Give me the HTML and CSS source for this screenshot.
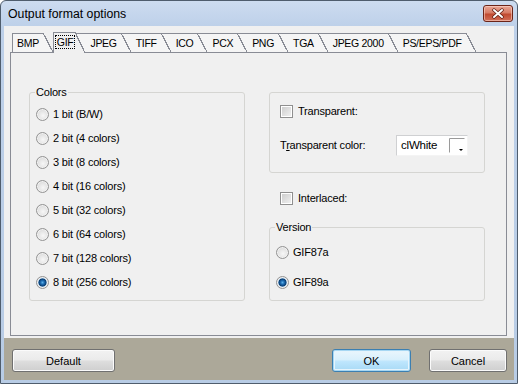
FILE: index.html
```html
<!DOCTYPE html>
<html>
<head>
<meta charset="utf-8">
<title>Output format options</title>
<link rel="stylesheet" href="styles.css">
</head>
<body>
<div class="window">
  <div class="titlebar">
    <span class="title">Output format options</span>
    <span class="close"><svg width="14" height="11" viewBox="0 0 14 11"><path d="M3 2 L11 9 M11 2 L3 9" stroke="#5a1a10" stroke-width="3.4" stroke-linecap="round"/><path d="M3 2 L11 9 M11 2 L3 9" stroke="#fff" stroke-width="2" stroke-linecap="round"/></svg></span>
  </div>
  <div class="client">
    <div class="pagearea">
      <div class="tabs">
        <span class="tab">BMP</span>
        <span class="tab sel"><span class="focus">GIF</span></span>
        <span class="tab">JPEG</span>
        <span class="tab">TIFF</span>
        <span class="tab">ICO</span>
        <span class="tab">PCX</span>
        <span class="tab">PNG</span>
        <span class="tab">TGA</span>
        <span class="tab">JPEG 2000</span>
        <span class="tab">PS/EPS/PDF</span>
      </div>
      <div class="panel">
        <fieldset class="group colors">
          <legend>Colors</legend>
          <div class="row first"><span class="radio"></span>1 bit (B/W)</div>
          <div class="row"><span class="radio"></span>2 bit (4 colors)</div>
          <div class="row"><span class="radio"></span>3 bit (8 colors)</div>
          <div class="row"><span class="radio"></span>4 bit (16 colors)</div>
          <div class="row"><span class="radio"></span>5 bit (32 colors)</div>
          <div class="row"><span class="radio"></span>6 bit (64 colors)</div>
          <div class="row"><span class="radio"></span>7 bit (128 colors)</div>
          <div class="row"><span class="radio on"></span>8 bit (256 colors)</div>
        </fieldset>
        <div class="rightcol">
          <div class="box">
            <div class="row"><span class="check"></span>Transparent:</div>
            <div class="row colorrow">
              <span class="colorlabel">T<u>r</u>ansparent color:</span>
              <span class="combo"><span>clWhite</span><svg class="swatch" width="16" height="15" viewBox="0 0 16 15"><rect x="0.5" y="0.5" width="15" height="14" fill="#fff" stroke="#fff"/><path d="M0.5 14.5 V0.5 H15.5" fill="none" stroke="#9a9a9a"/><path d="M10 11 H14 L12 13 Z" fill="#000"/></svg></span>
            </div>
          </div>
          <div class="row inter"><span class="check"></span>Interlaced:</div>
          <fieldset class="group version">
            <legend>Version</legend>
            <div class="row first"><span class="radio"></span>GIF87a</div>
            <div class="row gap"><span class="radio on"></span>GIF89a</div>
          </fieldset>
        </div>
      </div>
    </div>
    <div class="buttons">
      <button class="btn wide">Default</button>
      <span class="spacer"></span>
      <button class="btn ok">OK</button>
      <button class="btn cancel">Cancel</button>
    </div>
  </div>
</div>
</body>
</html>
```

FILE: styles.css
```css
* { box-sizing: border-box; }
html, body { margin: 0; padding: 0; }
body {
  width: 518px; height: 384px; overflow: hidden; background: #ffffff;
  font-family: "Liberation Sans", Arial, sans-serif; font-size: 11px; color: #000;
}
.window {
  width: 518px; height: 384px;
  display: flex; flex-direction: column;
  border: 1px solid #4f5d6d;
  border-radius: 6px 6px 0 0;
  background: linear-gradient(#cddcf0, #bdd0e9 26px, #b8cce5);
}
.titlebar {
  height: 25px; flex: none;
  display: flex; align-items: center; justify-content: space-between;
  padding: 0 4px 0 7px;
}
.title { font-size: 12.3px; color: #000; }
.close {
  width: 30px; height: 17px;
  display: flex; align-items: center; justify-content: center;
  border: 1px solid #6b2418; border-radius: 3px;
  background: linear-gradient(#e9a695, #d77c66 45%, #c14a30 55%, #d2705a);
  box-shadow: inset 0 0 0 1px rgba(255,220,210,0.55);
}
.client {
  flex: 1; margin: 0 3px 3px 3px;
  display: flex; flex-direction: column;
  background: #aca899;
}
.pagearea {
  flex: none; background: #f0f0f0;
  padding: 7px 7px 2px 6px;
}
.tabs {
  display: flex; align-items: flex-end;
  height: 19px; padding-left: 2px;
}
.tab {
  position: relative;
  height: 19px;
  border-top: 1px solid #898c95;
  background: #f5f5f5;
  padding: 2px 4px 0 15px;
  margin-right: 10px;
  margin-left: -10px;
  line-height: 14px;
  font-size: 10.5px;
  letter-spacing: -0.3px;
  white-space: nowrap;
}
.tab::after {
  content: "";
  position: absolute;
  top: -1px; bottom: 0; right: -10px; width: 10px;
  background: linear-gradient(to top right, #f5f5f5 calc(50% - 0.6px), #898c95 calc(50% - 0.6px), #898c95 calc(50% + 0.6px), transparent calc(50% + 0.6px));
}
.tab:nth-child(1) { z-index: 10; margin-left: 0; padding-left: 4px; border-left: 1px solid #898c95; }
.tab:nth-child(2) { z-index: 9; }
.tab:nth-child(3) { z-index: 8; }
.tab:nth-child(4) { z-index: 7; }
.tab:nth-child(5) { z-index: 6; }
.tab:nth-child(6) { z-index: 5; }
.tab:nth-child(7) { z-index: 4; }
.tab:nth-child(8) { z-index: 3; }
.tab:nth-child(9) { z-index: 2; }
.tab:nth-child(10) { z-index: 1; }
.tab.sel {
  z-index: 20;
  height: 21px; margin-bottom: -1px;
  margin-left: 0;
  border-left: 1px solid #898c95;
  background: #f0f0f0;
  padding: 2px 1px 0 2px;
}
.tab.sel::after {
  background: linear-gradient(to top right, #f0f0f0 calc(50% - 0.6px), #898c95 calc(50% - 0.6px), #898c95 calc(50% + 0.6px), transparent calc(50% + 0.6px));
}
.focus { padding: 0 1px; outline: 1px dotted #000; outline-offset: 0; }
.panel {
  height: 284px;
  border: 1px solid #898c95;
  background: #f0f0f0;
  display: grid;
  grid-template-columns: 216px 216px;
  column-gap: 24px;
  align-items: start;
  padding: 33px 0 0 18px;
}
.group {
  margin: 0; min-width: 0;
  border: 1px solid #d5d5d2;
  border-radius: 3px;
  padding: 0 0 6px 6px;
}
.group legend {
  padding: 0 1px; margin-left: -1px;
  line-height: 13px; font-size: 11px;
  letter-spacing: -0.2px;
}
.row { display: flex; align-items: center; height: 24px; white-space: nowrap; letter-spacing: -0.2px; }
.group .row.first { margin-top: 3px; }
.radio {
  flex: none; width: 13px; height: 13px; margin-right: 4px;
  border-radius: 50%;
  border: 1px solid #939393;
  background: radial-gradient(circle at 55% 60%, #f7f7f7 0, #e6e6e6 45%, #cdcdcd 100%);
  box-shadow: inset 0 0 0 1px #f2f2f2;
}
.radio.on {
  background: radial-gradient(circle at 50% 50%, #5aaee8 0, #1a67ad 2px, #0b3f73 3.6px, #9fc1df 4.4px, #e9e9e9 5.2px, #d0d0d0 100%);
}
.rightcol { display: flex; flex-direction: column; }
.box {
  margin-top: 6px; height: 81px;
  border: 1px solid #d5d5d2; border-radius: 3px;
  padding: 6px 0 0 10px;
}
.check {
  flex: none; width: 13px; height: 13px; margin-right: 5px;
  border: 1px solid #8f8f8f;
  background: linear-gradient(135deg, #cbcbcb, #f3f3f3);
  box-shadow: inset 0 0 0 1px #ffffff;
}
.colorrow { margin-top: 10px; }
.colorlabel { width: 116px; }
.colorlabel u { text-decoration-thickness: 1px; }
.combo {
  width: 72px; height: 21px;
  display: flex; align-items: center; justify-content: space-between;
  padding: 0 2px 0 4px;
  background: #fff;
  border: 1px solid #e2e3e4;
  border-color: #cfd0d2 #f4f4f4 #f4f4f4 #cfd0d2;
  font-size: 11.5px;
}
.swatch { display: block; }
.inter { margin-top: 13px; padding-left: 11px; }
.version { margin-top: 11px; }
.version .row.gap { margin-top: 6px; }
.version .row.first { margin-top: 6px; }
.buttons {
  flex: 1; display: flex; align-items: flex-start;
  padding: 11px 7px 0 8px;
}
.spacer { flex: 1; }
.btn {
  height: 23px; padding: 0; margin: 0;
  font-family: "Liberation Sans", Arial, sans-serif; font-size: 11px; color: #000;
  border: 1px solid #707070; border-radius: 3px;
  background: linear-gradient(#f2f2f2, #ebebeb 45%, #dddddd 55%, #cfcfcf);
  box-shadow: inset 0 0 0 1px #fbfbfb;
}
.wide { width: 103px; }
.ok {
  width: 79px;
  border-color: #3c7fb1;
  background: linear-gradient(#eaf6fd, #d9f0fc 45%, #bee6fd 55%, #a7d9f5);
  box-shadow: inset 0 0 0 1px #a6d7f3, inset 0 0 0 2px #e6f4fc;
}
.cancel { width: 78px; margin-left: 18px; }
```
